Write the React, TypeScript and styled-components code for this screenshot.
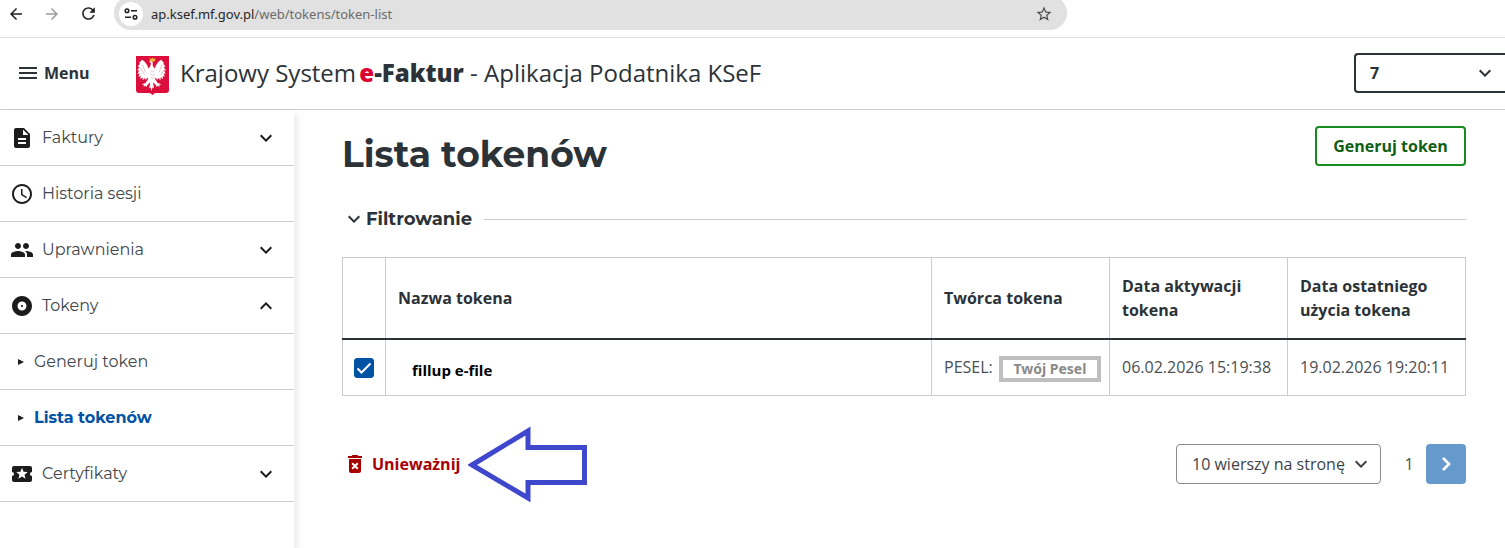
import React from "react";
import styled, { createGlobalStyle } from "styled-components";
import {
  MdAccessTime,
  MdAlbum,
  MdArrowBack,
  MdArrowForward,
  MdDeleteForever,
  MdDescription,
  MdExpandLess,
  MdExpandMore,
  MdLocalActivity,
  MdPeople,
  MdRefresh,
  MdStarBorder,
} from "react-icons/md";

const body = `"Open Sans", "Noto Sans", sans-serif`;
const display = `Montserrat, Inter, "Open Sans", sans-serif`;

const ink = "#2b3338";
const line = "#cccccc";

const GlobalStyle = createGlobalStyle`
  *, *::before, *::after { box-sizing: border-box; }
  html, body { margin: 0; padding: 0; background: #fff; }
  body { color: ${ink}; font: 16px/24px ${body}; }
  button, input, select { font: inherit; color: inherit; margin: 0; }
  button { cursor: pointer; }
  svg { display: block; flex: none; }
`;

const Page = styled.div`
  display: flex;
  flex-direction: column;
  min-height: 100vh;
  overflow: hidden;
`;

/* Browser toolbar */

const BrowserBar = styled.div`
  display: flex;
  align-items: flex-start;
  height: 38px;
  border-bottom: 1px solid #dedede;
`;

const NavButtons = styled.div`
  display: flex;
  align-items: center;
  gap: 12px;
  height: 27px;
  padding: 0 14px 0 4px;
`;

const NavButton = styled.button<{ $muted?: boolean }>`
  display: grid;
  place-items: center;
  width: 24px;
  height: 24px;
  padding: 0;
  border: 0;
  background: none;
  color: ${(p) => (p.$muted ? "#9c9c9c" : "#1f1f1f")};
`;

const AddressBar = styled.div`
  display: flex;
  align-items: center;
  flex: 0 1 953px;
  min-width: 0;
  height: 34px;
  margin-top: -4px;
  padding: 2px 14px 0 5px;
  border-radius: 17px;
  background: #e1e1e1;
`;

const SiteInfo = styled.button`
  display: grid;
  place-items: center;
  width: 24px;
  height: 24px;
  padding: 0;
  border: 0;
  border-radius: 50%;
  background: #fff;
  color: #1f1f1f;
`;

const Address = styled.span`
  flex: 1;
  min-width: 0;
  padding-left: 8px;
  overflow: hidden;
  white-space: nowrap;
  font: 13px/20px "Noto Sans", sans-serif;
  color: #6b6b6b;

  b {
    font-weight: 400;
    color: #262626;
  }
`;

/* Application header */

const Header = styled.header`
  display: flex;
  align-items: center;
  height: 72px;
  padding: 0 0 1px 18px;
  border-bottom: 1px solid ${line};
`;

const MenuButton = styled.button`
  display: flex;
  align-items: center;
  gap: 7px;
  width: 117px;
  padding: 0;
  border: 0;
  background: none;
  font-weight: 700;
`;

const Brand = styled.a`
  display: flex;
  align-items: center;
  gap: 9px;
  flex: 1;
  min-width: 0;
  color: ${ink};
  text-decoration: none;
  white-space: nowrap;
  font-size: 24px;
  line-height: 32px;
`;

const BrandStrong = styled.strong`
  margin-left: -3px;
  font-weight: 800;

  em {
    font-style: normal;
    color: #dc0032;
  }
`;

const SelectBox = styled.label`
  position: relative;
  display: block;
  flex: none;

  svg {
    position: absolute;
    top: 50%;
    right: 8px;
    translate: 0 -50%;
    pointer-events: none;
  }
`;

const ContextSelect = styled.select`
  appearance: none;
  display: block;
  width: 151px;
  height: 40px;
  padding: 0 32px 0 14px;
  border: 2px solid ${ink};
  border-right: 0;
  border-radius: 4px 0 0 4px;
  background: #fff;
  font-weight: 700;
`;

const PageSizeSelect = styled.select`
  appearance: none;
  display: block;
  width: 205px;
  height: 40px;
  padding: 0 28px 0 15px;
  border: 1px solid #8a8a8a;
  border-radius: 4px;
  background: #fff;
  color: #3d4347;
`;

/* Side navigation */

const Columns = styled.div`
  display: flex;
  flex: 1;
`;

const Sidebar = styled.nav`
  flex: none;
  width: 294px;
  box-shadow: 4px 4px 6px rgba(0, 0, 0, 0.07);
`;

const NavList = styled.ul`
  margin: 0;
  padding: 0;
  list-style: none;
`;

const NavLink = styled.a<{ $sub?: boolean; $active?: boolean }>`
  display: flex;
  align-items: center;
  gap: ${(p) => (p.$sub ? 10 : 8)}px;
  height: 56px;
  padding: 0 16px 0 ${(p) => (p.$sub ? 18 : 10)}px;
  border-bottom: 1px solid ${line};
  color: ${(p) => (p.$active ? "#0052a5" : "#40464a")};
  font-family: ${display};
  font-weight: ${(p) => (p.$active ? 700 : 400)};
  text-decoration: none;

  span {
    flex: 1;
    padding-top: 1px;
  }

  svg {
    color: #1c1c1c;
  }
`;

/* Content */

const Main = styled.main`
  flex: 1;
  min-width: 0;
  padding: 16px 39px 24px 48px;
`;

const TitleRow = styled.div`
  display: flex;
  align-items: flex-start;
  justify-content: space-between;
`;

const Title = styled.h1`
  margin: 0;
  font: 700 36px/56px ${display};
`;

const GenerateButton = styled.button`
  width: 151px;
  height: 40px;
  padding: 0;
  border: 2px solid #198a1e;
  border-radius: 4px;
  background: #fff;
  color: #0f6014;
  font-weight: 700;
`;

const FilterToggle = styled.button`
  display: flex;
  align-items: center;
  width: 100%;
  margin: 25px 0 26px;
  padding: 0;
  border: 0;
  background: none;
  font: 700 18px/24px ${display};

  &::after {
    content: "";
    flex: 1;
    margin-left: 12px;
    border-top: 1px solid ${line};
  }
`;

const Table = styled.table`
  width: 100%;
  table-layout: fixed;
  border-collapse: collapse;
  text-align: left;
`;

const HeadCell = styled.th<{ $width?: number }>`
  width: ${(p) => (p.$width ? `${p.$width}px` : "auto")};
  height: 81px;
  padding: 0 12px;
  border: 1px solid ${line};
  border-bottom: 2px solid ${ink};
  font-weight: 700;
`;

const Cell = styled.td<{ $center?: boolean }>`
  height: 57px;
  padding: ${(p) => (p.$center ? "2px 0 0" : "0 12px")};
  border: 1px solid ${line};
  color: #4a4f53;
  white-space: nowrap;
`;

const Check = styled.input`
  appearance: none;
  display: block;
  width: 20px;
  height: 20px;
  margin: 0 auto;
  border: 1px solid #0052a5;
  border-radius: 3px;
  background: #fff;

  &:checked {
    background: #0052a5;
  }
`;

const CheckBox = styled.label`
  position: relative;
  display: block;

  svg {
    position: absolute;
    inset: 0;
    margin: auto;
    pointer-events: none;
  }
`;

const TokenName = styled.strong`
  display: block;
  padding: 5px 0 0 14px;
  color: #000;
  font: 700 15px/24px ${body};
`;

const Creator = styled.div`
  display: flex;
  align-items: center;
  gap: 6px;
`;

const Redacted = styled.span`
  flex: 1;
  margin: 3px -4px 0 0;
  border: 4px solid #bfbfbf;
  background: #fff;
  color: #8a8a8a;
  font: 700 14px/18px "Noto Sans", sans-serif;
  text-align: center;
`;

const Footer = styled.div`
  display: flex;
  align-items: center;
  margin-top: 48px;
`;

const RevokeButton = styled.button`
  display: flex;
  align-items: center;
  gap: 5px;
  padding: 0 0 0 1px;
  border: 0;
  background: none;
  color: #a80000;
  font-weight: 700;
`;

const Pager = styled.div`
  display: flex;
  align-items: center;
  margin-left: auto;
`;

const PageNumber = styled.span`
  width: 45px;
  padding-left: 11px;
  text-align: center;
  color: #4a4f53;
`;

const NextButton = styled.button`
  display: grid;
  place-items: center;
  width: 40px;
  height: 40px;
  padding: 0;
  border: 0;
  border-radius: 4px;
  background: #6699cc;
  color: #fff;
`;

const ArrowDrawing = styled.svg`
  margin: -20px 0 -20px 8px;
`;

function SettingsIcon() {
  return (
    <svg width="14" height="14" viewBox="0 0 14 14" fill="none" stroke="currentColor" strokeWidth="1.5" aria-hidden="true">
      <circle cx="3" cy="3.8" r="1.8" />
      <path d="M7 3.8h6M1 10.2h6" />
      <circle cx="11" cy="10.2" r="1.8" />
    </svg>
  );
}

function MenuIcon() {
  return (
    <svg width="19" height="14" viewBox="0 0 19 14" fill="currentColor" aria-hidden="true">
      <path d="M1 1h18v2H1zM1 6h18v2H1zM1 11h18v2H1z" />
    </svg>
  );
}

function Emblem() {
  return (
    <svg width="36" height="46" viewBox="0 -5 36 46" role="img" aria-label="Godło">
      <path d="M1 1h33v34q0 3-3 3H21.500q-3 0-4 2.300-1-2.300-4-2.300H4q-3 0-3-3z" fill="#dc0f3c" />
      <path
        fill="#fff"
        d="M16 5.500l-2 1.500 2 .8-.6 3.200-2 2.500c-1-3.500-2.500-6.500-6.500-9-.2 1.500-1.600 1.800-3 3.500l1.300.5-2.500 3 1.800.4-2.300 3.300 2 .2-1.700 3.300 2.100-.2-1.200 3.200 2.300-.8-.5 3.200 2.400-1.600.1 2.800 2.300-2.200.7 2 1.700-2.300.8 1-2.600 4.200-3.800 1.200 2.400.9-1 1.600 2.700-1 .3 1.500 1.400-2.400 2.600-2.600-1 6 1.400-.8.900 3.500 1-3.500 1.500.8-1-6 2.600 2.600 1.400 2.400.3-1.500 2.700 1-1-1.600 2.400-.9-3.800-1.200-2.600-4.200.8-1 1.700 2.300.7-2 2.300 2.200.1-2.800 2.400 1.600-.5-3.200 2.300.8-1.200-3.200 2.100.2-1.700-3.300 2-.2-2.300-3.300 1.800-.4-2.500-3 1.300-.5c-1.400-1.700-2.800-2-3-3.500-4 2.500-5.500 5.500-6.500 9l-2-2.500-.2-4.500z"
      />
      <path
        fill="none"
        stroke="#d9a9b4"
        strokeWidth=".7"
        d="M7.500 9.500l3 8M5.500 13l4 7M27 9.500l-3 8M30 13l-4 7M15.500 15.500l2 1.500 2-1.500M15 18.500l2.500 2 2.500-2M15.500 22l2 1.500 2-1.500"
      />
      <path d="M14.700 5.500V3l1.500 1 1.300-1.500L18.800 4l1.500-1v2.500l-.8 1h-4z" fill="#f2b33d" />
    </svg>
  );
}

function TriangleIcon() {
  return (
    <svg width="6" height="8" viewBox="0 0 6 8" fill="currentColor" aria-hidden="true">
      <path d="M0 1l6 3-6 3z" />
    </svg>
  );
}

type Item = {
  label: string;
  icon?: React.ReactNode;
  state?: "open" | "closed";
  sub?: boolean;
  active?: boolean;
};

const items: Item[] = [
  { label: "Faktury", icon: <MdDescription size={24} />, state: "closed" },
  { label: "Historia sesji", icon: <MdAccessTime size={24} /> },
  { label: "Uprawnienia", icon: <MdPeople size={24} />, state: "closed" },
  { label: "Tokeny", icon: <MdAlbum size={24} />, state: "open" },
  { label: "Generuj token", sub: true },
  { label: "Lista tokenów", sub: true, active: true },
  { label: "Certyfikaty", icon: <MdLocalActivity size={24} />, state: "closed" },
];

export default function App() {
  return (
    <Page>
      <GlobalStyle />
      <BrowserBar>
        <NavButtons>
          <NavButton aria-label="Wstecz"><MdArrowBack size={18} /></NavButton>
          <NavButton $muted aria-label="Dalej"><MdArrowForward size={18} /></NavButton>
          <NavButton aria-label="Odśwież"><MdRefresh size={19} /></NavButton>
        </NavButtons>
        <AddressBar>
          <SiteInfo aria-label="Informacje o witrynie"><SettingsIcon /></SiteInfo>
          <Address><b>ap.ksef.mf.gov.pl</b>/web/tokens/token-list</Address>
          <MdStarBorder size={18} color="#4a4a4a" />
        </AddressBar>
      </BrowserBar>

      <Header>
        <MenuButton><MenuIcon />Menu</MenuButton>
        <Brand href="#">
          <Emblem />
          <span>
            Krajowy System <BrandStrong><em>e</em>-Faktur</BrandStrong> - Aplikacja Podatnika KSeF
          </span>
        </Brand>
        <SelectBox>
          <ContextSelect aria-label="Kontekst" defaultValue="7">
            <option>7</option>
          </ContextSelect>
          <MdExpandMore size={24} />
        </SelectBox>
      </Header>

      <Columns>
        <Sidebar>
          <NavList>
            {items.map((item) => (
              <li key={item.label}>
                <NavLink href="#" $sub={item.sub} $active={item.active}>
                  {item.sub ? <TriangleIcon /> : item.icon}
                  <span>{item.label}</span>
                  {item.state === "closed" && <MdExpandMore size={24} />}
                  {item.state === "open" && <MdExpandLess size={24} />}
                </NavLink>
              </li>
            ))}
          </NavList>
        </Sidebar>

        <Main>
          <TitleRow>
            <Title>Lista tokenów</Title>
            <GenerateButton>Generuj token</GenerateButton>
          </TitleRow>

          <FilterToggle><MdExpandMore size={24} />Filtrowanie</FilterToggle>

          <Table>
            <thead>
              <tr>
                <HeadCell $width={43} aria-label="Wybór" />
                <HeadCell>Nazwa tokena</HeadCell>
                <HeadCell $width={178}>Twórca tokena</HeadCell>
                <HeadCell $width={178}>Data aktywacji tokena</HeadCell>
                <HeadCell $width={178}>Data ostatniego użycia tokena</HeadCell>
              </tr>
            </thead>
            <tbody>
              <tr>
                <Cell $center>
                  <CheckBox>
                    <Check type="checkbox" defaultChecked aria-label="fillup e-file" />
                    <svg width="16" height="16" viewBox="0 0 16 16" fill="none" stroke="#fff" strokeWidth="2" aria-hidden="true">
                      <path d="M1.500 8.500l4 4 9-9" />
                    </svg>
                  </CheckBox>
                </Cell>
                <Cell><TokenName>fillup e-file</TokenName></Cell>
                <Cell><Creator>PESEL:<Redacted>Twój Pesel</Redacted></Creator></Cell>
                <Cell>06.02.2026 15:19:38</Cell>
                <Cell>19.02.2026 19:20:11</Cell>
              </tr>
            </tbody>
          </Table>

          <Footer>
            <RevokeButton><MdDeleteForever size={24} />Unieważnij</RevokeButton>
            <ArrowDrawing width="120" height="76" viewBox="0 0 120 76" fill="none" stroke="#3f48cc" strokeWidth="5" aria-hidden="true">
              <path d="M4 39L60 5V21.500H116.500V56.500H60V72z" />
            </ArrowDrawing>
            <Pager>
              <SelectBox>
                <PageSizeSelect aria-label="Liczba wierszy na stronę">
                  <option>10 wierszy na stronę</option>
                </PageSizeSelect>
                <MdExpandMore size={24} color="#3d4347" />
              </SelectBox>
              <PageNumber>1</PageNumber>
              <NextButton aria-label="Następna strona">
                <svg width="20" height="20" viewBox="0 0 20 20" fill="none" stroke="currentColor" strokeWidth="2.600" aria-hidden="true">
                  <path d="M7 4l6 6-6 6" />
                </svg>
              </NextButton>
            </Pager>
          </Footer>
        </Main>
      </Columns>
    </Page>
  );
}
